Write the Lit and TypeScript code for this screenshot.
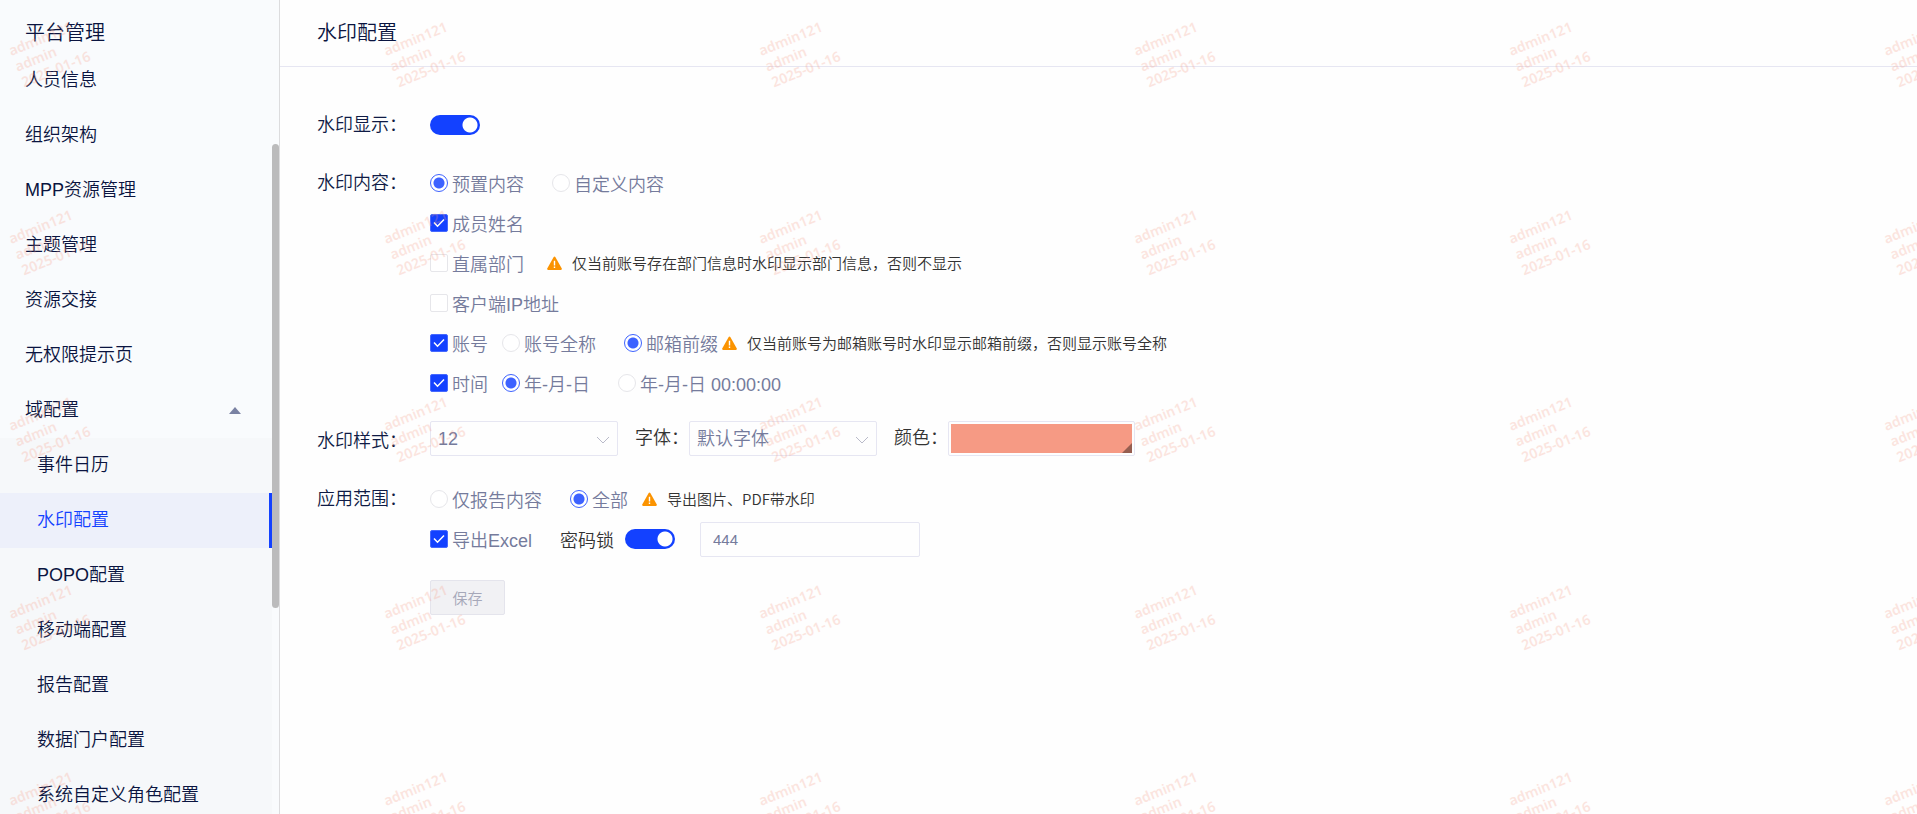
import { LitElement, html, css, svg } from "lit";
import { customElement, state } from "lit/decorators.js";
import { classMap } from "lit/directives/class-map.js";

const TOP_ITEMS = ["人员信息", "组织架构", "MPP资源管理", "主题管理", "资源交接", "无权限提示页"];
const DOMAIN_ITEMS = ["事件日历", "水印配置", "POPO配置", "移动端配置", "报告配置", "数据门户配置", "系统自定义角色配置"];
const STAMP_LINES = ["admin121", "admin", "2025-01-16"];

@customElement("side-menu")
export class SideMenu extends LitElement {
  static styles = css`
    :host {
      display: block;
      position: relative;
      flex: none;
      width: 279px;
      overflow: hidden;
      border-right: 1px solid #dcdcde;
      background: #f9fbfd;
      color: #0a1440;
    }
    .title {
      margin: 0;
      padding: 13px 0 0 25px;
      font-size: 20px;
      font-weight: inherit;
      line-height: 40px;
    }
    .list {
      display: flex;
      flex-direction: column;
      margin-right: 7px;
    }
    .item {
      display: flex;
      align-items: center;
      justify-content: space-between;
      box-sizing: border-box;
      height: 55px;
      padding: 0 31px 6px 25px;
      border: 0;
      background: none;
      color: inherit;
      font: inherit;
      font-size: 18px;
      text-decoration: none;
    }
    .sub {
      display: flex;
      flex-direction: column;
      background: #f6f8fa;
    }
    .sub .item {
      padding-left: 37px;
    }
    .sub .active {
      border-right: 3px solid #1341ff;
      background: #edf0fa;
      color: #1341ff;
    }
    .arrow {
      width: 12px;
      height: 7px;
      margin-top: 6px;
      fill: #7a82a3;
    }
    .thumb {
      position: absolute;
      top: 144px;
      right: 0;
      width: 7px;
      height: 464px;
      border-radius: 4px;
      background: #bbbbbc;
    }
  `;

  render() {
    return html`
      <h2 class="title">平台管理</h2>
      <nav class="list">
        ${TOP_ITEMS.map((t) => html`<a class="item" href="#">${t}</a>`)}
        <button class="item" type="button" aria-expanded="true">
          域配置
          <svg class="arrow" viewBox="0 0 12 7"><path d="M6 0L12 7H0z" /></svg>
        </button>
        <div class="sub">
          ${DOMAIN_ITEMS.map(
            (t) => html`<a class=${classMap({ item: true, active: t === "水印配置" })} href="#">${t}</a>`
          )}
        </div>
      </nav>
      <div class="thumb"></div>
    `;
  }
}

@customElement("stamp-layer")
export class StampLayer extends LitElement {
  static styles = css`
    :host {
      display: grid;
      grid-template-columns: repeat(6, 375px);
      grid-auto-rows: 375px;
      position: absolute;
      inset: 0;
      overflow: hidden;
      pointer-events: none;
      color: #f69a84;
      opacity: 0.25;
      font: 600 14px/17px "Noto Sans", "Liberation Sans", sans-serif;
    }
    .cell {
      display: flex;
      flex-direction: column;
    }
    .slot {
      flex: 1;
      padding: 43px 0 0 6px;
    }
    .stamp {
      width: 90px;
      transform: rotate(-22deg);
      transform-origin: 0 0;
    }
    .line {
      display: block;
    }
  `;

  private stamp() {
    return html`<div class="slot">
      <div class="stamp">${STAMP_LINES.map((l) => html`<span class="line">${l}</span>`)}</div>
    </div>`;
  }

  render() {
    return Array.from({ length: 18 }, () => html`<div class="cell">${this.stamp()}${this.stamp()}</div>`);
  }
}

@customElement("app-root")
export class AppRoot extends LitElement {
  @state() private enabled = true;
  @state() private locked = true;

  static styles = css`
    :host {
      display: flex;
      position: relative;
      height: 100vh;
      overflow: hidden;
      background: #fefefe;
      font-family: "Liberation Sans", "Noto Sans CJK SC", sans-serif;
      font-weight: 350;
    }
    .main {
      flex: 1;
      min-width: 0;
      overflow: hidden;
    }
    .head {
      padding: 13px 37px;
      border-bottom: 1px solid #e6e6f2;
    }
    .head-title {
      margin: 0;
      color: #0a1440;
      font-size: 20px;
      font-weight: inherit;
      line-height: 40px;
    }
    .form {
      display: flex;
      flex-direction: column;
      gap: 18px;
      padding: 38px 37px;
    }
    .row {
      display: grid;
      grid-template-columns: 113px 1fr;
      font-size: 18px;
    }
    .name {
      color: #0f1b45;
      line-height: 40px;
    }
    .line {
      display: flex;
      align-items: center;
      height: 40px;
    }
    .line.top {
      align-items: flex-start;
    }
    .opt {
      display: flex;
      align-items: center;
      gap: 4px;
      color: #757b9c;
      white-space: nowrap;
    }
    .near {
      margin-left: 14px;
    }
    .far {
      margin-left: 28px;
    }
    .tick,
    .dot {
      appearance: none;
      flex: none;
      box-sizing: border-box;
      width: 18px;
      height: 18px;
      margin: 0;
      border: 1px solid #e6e6ea;
      background: #fff;
    }
    .tick {
      border-radius: 2px;
    }
    .dot {
      border-radius: 50%;
    }
    .tick:checked {
      border-color: #4669ff;
      background: #1341ff
        url("data:image/svg+xml,%3Csvg xmlns='http://www.w3.org/2000/svg' viewBox='0 0 16 16'%3E%3Cpath d='M3 7.5l3.5 3.7L13 4.4' fill='none' stroke='white' stroke-width='1.5'/%3E%3C/svg%3E");
    }
    .dot:checked {
      border-color: #3d62ff;
      background: radial-gradient(circle, #3d62ff 5px, #fff 6px);
    }
    .switch {
      appearance: none;
      flex: none;
      width: 50px;
      height: 20px;
      margin: 0;
      border-radius: 10px;
      background: #1341ff radial-gradient(circle at 40px 10px, #fff 7px, transparent 8px);
    }
    .switch:not(:checked) {
      background: #c4c7d6 radial-gradient(circle at 10px 10px, #fff 7px, transparent 8px);
    }
    .hint {
      display: flex;
      align-items: center;
      gap: 10px;
      color: #333;
      font-family: "Noto Sans CJK SC", sans-serif;
      font-size: 15px;
      line-height: 20px;
      padding-bottom: 1px;
      white-space: nowrap;
    }
    .hint.tight {
      margin-left: 4px;
    }
    .hint.wide {
      margin-left: 23px;
    }
    .warn {
      width: 15px;
      height: 14px;
    }
    .side {
      margin: 0 0 0 17px;
      color: #333;
      line-height: 35px;
    }
    .lock {
      color: #333;
    }
    .pick {
      position: relative;
    }
    .select {
      appearance: none;
      display: block;
      box-sizing: border-box;
      width: 188px;
      height: 35px;
      padding: 0 30px 0 7px;
      border: 1px solid #e6e6f2;
      border-radius: 2px;
      background: transparent;
      color: #757b9c;
      font: inherit;
    }
    .chevron {
      position: absolute;
      top: 15px;
      right: 8px;
      width: 14px;
      height: 8px;
      fill: none;
      stroke: #b9bac9;
      pointer-events: none;
    }
    .color {
      appearance: none;
      display: block;
      box-sizing: border-box;
      width: 187px;
      height: 35px;
      padding: 2px;
      border: 1px solid #e6e6f2;
      border-radius: 2px;
      background: transparent;
    }
    .color::-webkit-color-swatch-wrapper {
      padding: 0;
    }
    .color::-webkit-color-swatch {
      border: 0;
      border-radius: 0;
    }
    .corner {
      position: absolute;
      right: 3px;
      bottom: 3px;
      width: 10px;
      height: 10px;
      fill: #965e50;
      pointer-events: none;
    }
    .lock-switch {
      margin-left: 11px;
    }
    .field {
      box-sizing: border-box;
      width: 220px;
      height: 35px;
      margin-left: 25px;
      padding: 0 12px;
      border: 1px solid #e6e6f2;
      border-radius: 2px;
      background: transparent;
      color: #757b9c;
      font: inherit;
      font-size: 15px;
    }
    .save {
      width: 75px;
      height: 35px;
      padding: 0;
      border: 1px solid #e4e4ec;
      border-radius: 2px;
      background: #f1f1f4;
      color: #a6a8b9;
      font: inherit;
      font-size: 15px;
    }
  `;

  private check(label: string, checked: boolean) {
    return html`<label class="opt"><input class="tick" type="checkbox" .checked=${checked} />${label}</label>`;
  }

  private radio(group: string, label: string, checked: boolean, gap = "") {
    return html`<label class="opt ${gap}"
      ><input class="dot" type="radio" name=${group} .checked=${checked} />${label}</label
    >`;
  }

  private hint(text: string, gap: string) {
    return html`<span class="hint ${gap}">
      <svg class="warn" viewBox="0 0 15 14">
        ${svg`<path d="M7.5 0.5Q8 0.5 8.3 1L14.8 12.6Q15 14 14 14H1Q0 14 0.2 12.6L6.7 1Q7 0.5 7.5 0.5z" fill="#fb9300"/>
        <path d="M7.5 4.8V9.4M7.5 10.6V12.1" stroke="#fff" stroke-width="1.4"/>`}
      </svg>
      ${text}
    </span>`;
  }

  private select(id: string, value: string) {
    return html`<div class="pick">
      <select class="select" id=${id}>
        <option>${value}</option>
      </select>
      <svg class="chevron" viewBox="0 0 14 8"><path d="M1 1l6 6 6-6" /></svg>
    </div>`;
  }

  render() {
    return html`
      <side-menu></side-menu>
      <main class="main">
        <header class="head"><h1 class="head-title">水印配置</h1></header>
        <form class="form">
          <div class="row">
            <label class="name" for="show">水印显示：</label>
            <div class="line">
              <input
                class="switch"
                id="show"
                type="checkbox"
                role="switch"
                .checked=${this.enabled}
                @change=${() => (this.enabled = !this.enabled)}
              />
            </div>
          </div>
          <div class="row">
            <span class="name">水印内容：</span>
            <div>
              <div class="line">
                ${this.radio("content", "预置内容", true)} ${this.radio("content", "自定义内容", false, "far")}
              </div>
              <div class="line">${this.check("成员姓名", true)}</div>
              <div class="line">
                ${this.check("直属部门", false)}
                ${this.hint("仅当前账号存在部门信息时水印显示部门信息，否则不显示", "wide")}
              </div>
              <div class="line">${this.check("客户端IP地址", false)}</div>
              <div class="line">
                ${this.check("账号", true)} ${this.radio("account", "账号全称", false, "near")}
                ${this.radio("account", "邮箱前缀", true, "far")}
                ${this.hint("仅当前账号为邮箱账号时水印显示邮箱前缀，否则显示账号全称", "tight")}
              </div>
              <div class="line">
                ${this.check("时间", true)} ${this.radio("time", "年-月-日", true, "near")}
                ${this.radio("time", "年-月-日 00:00:00", false, "far")}
              </div>
            </div>
          </div>
          <div class="row">
            <label class="name" for="size">水印样式：</label>
            <div class="line top">
              ${this.select("size", "12")}
              <label class="side" for="font">字体：</label>
              ${this.select("font", "默认字体")}
              <label class="side" for="color">颜色：</label>
              <div class="pick">
                <input class="color" id="color" type="color" value="#f69a84" />
                <svg class="corner" viewBox="0 0 10 10"><path d="M10 0V10H0z" /></svg>
              </div>
            </div>
          </div>
          <div class="row">
            <span class="name">应用范围：</span>
            <div>
              <div class="line">
                ${this.radio("scope", "仅报告内容", false)} ${this.radio("scope", "全部", true, "far")}
                ${this.hint("导出图片、PDF带水印", "near")}
              </div>
              <div class="line">
                ${this.check("导出Excel", true)}
                <label class="lock far" for="lock">密码锁</label>
                <input
                  class="switch lock-switch"
                  id="lock"
                  type="checkbox"
                  role="switch"
                  .checked=${this.locked}
                  @change=${() => (this.locked = !this.locked)}
                />
                <input class="field" type="text" aria-label="密码" value="444" />
              </div>
            </div>
          </div>
          <div class="row">
            <span></span>
            <div class="line"><button class="save" type="button" disabled>保存</button></div>
          </div>
        </form>
      </main>
      <stamp-layer></stamp-layer>
    `;
  }
}
